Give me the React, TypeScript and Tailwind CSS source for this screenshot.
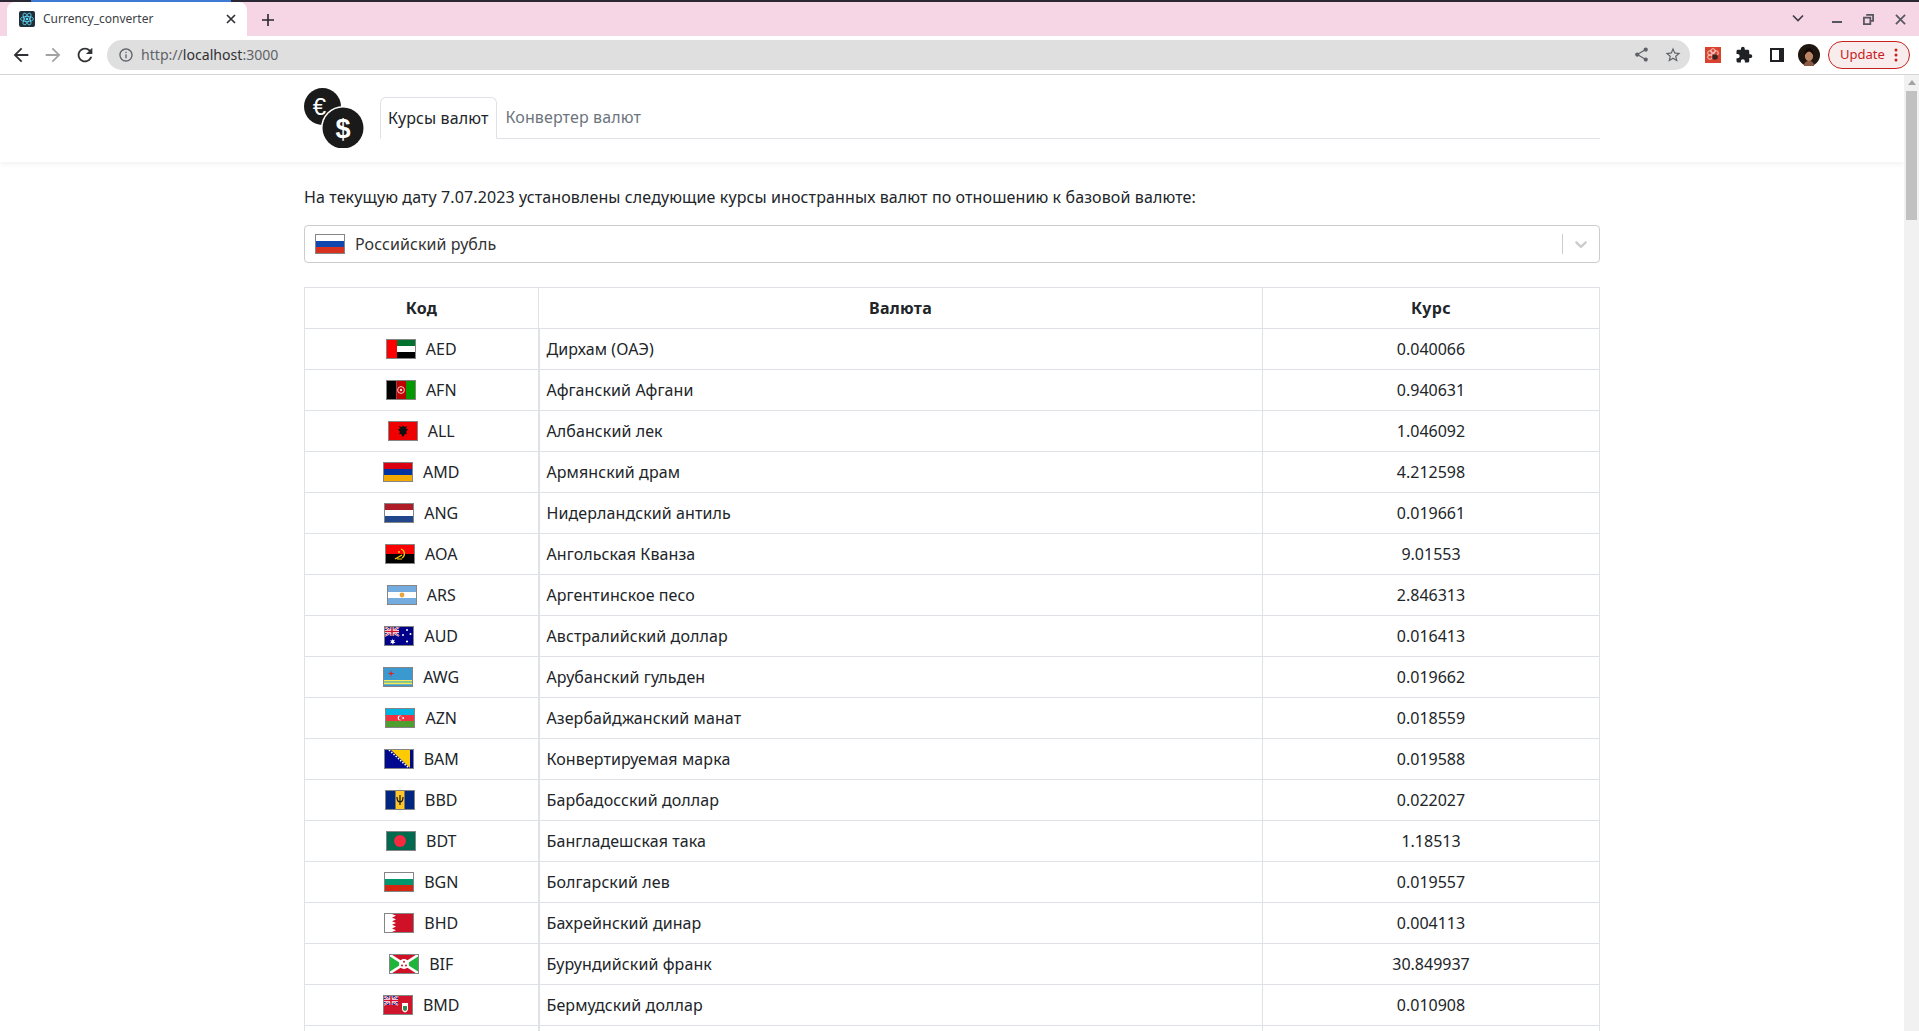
import type { ReactNode } from "react";

const rates = [
  ["AED", "Дирхам (ОАЭ)", "0.040066"],
  ["AFN", "Афганский Афгани", "0.940631"],
  ["ALL", "Албанский лек", "1.046092"],
  ["AMD", "Армянский драм", "4.212598"],
  ["ANG", "Нидерландский антиль", "0.019661"],
  ["AOA", "Ангольская Кванза", "9.01553"],
  ["ARS", "Аргентинское песо", "2.846313"],
  ["AUD", "Австралийский доллар", "0.016413"],
  ["AWG", "Арубанский гульден", "0.019662"],
  ["AZN", "Азербайджанский манат", "0.018559"],
  ["BAM", "Конвертируемая марка", "0.019588"],
  ["BBD", "Барбадосский доллар", "0.022027"],
  ["BDT", "Бангладешская така", "1.18513"],
  ["BGN", "Болгарский лев", "0.019557"],
  ["BHD", "Бахрейнский динар", "0.004113"],
  ["BIF", "Бурундийский франк", "30.849937"],
  ["BMD", "Бермудский доллар", "0.010908"],
];

function Stripes({ colors }: { colors: string[] }) {
  const h = 18 / colors.length;
  return (
    <>
      {colors.map((c, i) => (
        <rect key={i} x="0" y={i * h} width="28" height={h + 0.1} fill={c} />
      ))}
    </>
  );
}

function UnionJack({ w = 14, h = 9 }: { w?: number; h?: number }) {
  return (
    <g>
      <rect width={w} height={h} fill="#1a2f8f" />
      <path d={`M0 0L${w} ${h}M${w} 0L0 ${h}`} stroke="#fff" strokeWidth="2" />
      <path d={`M0 0L${w} ${h}M${w} 0L0 ${h}`} stroke="#d6102c" strokeWidth="0.8" />
      <path d={`M${w / 2} 0V${h}M0 ${h / 2}H${w}`} stroke="#fff" strokeWidth="3" />
      <path d={`M${w / 2} 0V${h}M0 ${h / 2}H${w}`} stroke="#d6102c" strokeWidth="1.6" />
    </g>
  );
}

const flags: Record<string, ReactNode> = {
  RUB: <Stripes colors={["#ffffff", "#0f47af", "#d8301f"]} />,
  AED: (
    <>
      <Stripes colors={["#00732f", "#ffffff", "#000000"]} />
      <rect width="10" height="18" fill="#ff0000" />
    </>
  ),
  AFN: (
    <>
      <rect width="9.5" height="18" fill="#000" />
      <rect x="9.5" width="9.5" height="18" fill="#be0000" />
      <rect x="19" width="9" height="18" fill="#009900" />
      <circle cx="14" cy="9" r="3.4" fill="none" stroke="#f3d0d0" strokeWidth="1" />
      <circle cx="14" cy="9" r="1.2" fill="#f3d0d0" />
    </>
  ),
  ALL: (
    <>
      <rect width="28" height="18" fill="#f00000" />
      <path d="M14 3l1 2 3-1-1 3 2 0-2 3 1 2-2 0-2 3-2-3-2 0 1-2-2-3 2 0-1-3 3 1z" fill="#111" />
    </>
  ),
  AMD: <Stripes colors={["#d90012", "#0033a0", "#f2a800"]} />,
  ANG: <Stripes colors={["#ae1c28", "#ffffff", "#21468b"]} />,
  AOA: (
    <>
      <rect width="28" height="9" fill="#ff0000" />
      <rect y="9" width="28" height="9" fill="#000" />
      <path d="M15 4a5 5 0 0 1 1 9" fill="none" stroke="#ffcb00" strokeWidth="1.3" />
      <path d="M9 14l7-4M11 14h5" stroke="#ffcb00" strokeWidth="1.2" />
      <circle cx="13" cy="7" r="1" fill="#ffcb00" />
    </>
  ),
  ARS: (
    <>
      <Stripes colors={["#74acdf", "#ffffff", "#74acdf"]} />
      <circle cx="14" cy="9" r="2.4" fill="#e8a33d" />
    </>
  ),
  AUD: (
    <>
      <rect width="28" height="18" fill="#00008b" />
      <UnionJack />
      <path d="M7 11.5l.9 1.8 1.9-.6-.9 1.8 1.6 1.2-2 .2-.5 1.9-1-1.7-2 .2 1.3-1.5-1.3-1.5 2 .2z" fill="#fff" />
      <circle cx="22" cy="3" r="1" fill="#fff" />
      <circle cx="22" cy="14.5" r="1.1" fill="#fff" />
      <circle cx="18" cy="8" r="1" fill="#fff" />
      <circle cx="25.5" cy="7" r="1" fill="#fff" />
    </>
  ),
  AWG: (
    <>
      <rect width="28" height="18" fill="#3a99cf" />
      <rect y="12" width="28" height="1.3" fill="#f6ea5a" />
      <rect y="15" width="28" height="1.3" fill="#f6ea5a" />
      <rect y="13.3" width="28" height="1.7" fill="#8fc98a" />
      <path d="M7 2l.7 2.8 2.8.7-2.8.7L7 9l-.7-2.8-2.8-.7 2.8-.7z" fill="#e0202c" />
    </>
  ),
  AZN: (
    <>
      <Stripes colors={["#00b5e2", "#ef3340", "#509e2f"]} />
      <circle cx="14" cy="9" r="2.4" fill="#fff" />
      <circle cx="14.8" cy="9" r="2" fill="#ef3340" />
      <circle cx="17.2" cy="9" r="0.9" fill="#fff" />
    </>
  ),
  BAM: (
    <>
      <rect width="28" height="18" fill="#000a8f" />
      <path d="M6 0h19v18z" fill="#fecb00" />
      <path d="M4 0L24 18" stroke="#fff" strokeWidth="1.6" strokeDasharray="1.5 1.5" />
    </>
  ),
  BBD: (
    <>
      <rect width="28" height="18" fill="#00267f" />
      <rect x="9.5" width="9" height="18" fill="#ffc726" />
      <path d="M14 4v10M11 6c0 4 1 5 3 5s3-1 3-5" fill="none" stroke="#111" strokeWidth="1.2" />
    </>
  ),
  BDT: (
    <>
      <rect width="28" height="18" fill="#006a4e" />
      <circle cx="13" cy="9" r="6" fill="#f42a41" />
    </>
  ),
  BGN: <Stripes colors={["#ffffff", "#00966e", "#d62612"]} />,
  BHD: (
    <>
      <rect width="28" height="18" fill="#ce1126" />
      <path d="M0 0h7L11 1.8 7 3.6 11 5.4 7 7.2 11 9 7 10.8 11 12.6 7 14.4 11 16.2 7 18H0z" fill="#fff" />
    </>
  ),
  BIF: (
    <>
      <rect width="28" height="18" fill="#ce1126" />
      <path d="M0 0l14 9L0 18zM28 0L14 9l14 9z" fill="#1eb53a" />
      <path d="M0 0L28 18M28 0L0 18" stroke="#fff" strokeWidth="2.6" />
      <circle cx="14" cy="9" r="5" fill="#fff" />
      <circle cx="14" cy="6.8" r="1" fill="#ce1126" />
      <circle cx="12" cy="10.4" r="1" fill="#ce1126" />
      <circle cx="16" cy="10.4" r="1" fill="#ce1126" />
    </>
  ),
  BMD: (
    <>
      <rect width="28" height="18" fill="#cf142b" />
      <UnionJack />
      <path d="M18 7h6v6c0 2-1.500 3-3 3.500-1.500-.5-3-1.500-3-3.500z" fill="#fff" />
      <path d="M19 10h4v3c0 1-1 1.800-2 2.200-1-.4-2-1.200-2-2.200z" fill="#2f8f4e" />
    </>
  ),
};

function Flag({ code }: { code: string }) {
  return (
    <svg
      viewBox="0 0 28 18"
      preserveAspectRatio="none"
      className="h-5 w-[30px] shrink-0 border border-[#858585]"
    >
      {flags[code]}
    </svg>
  );
}

function Icon({ d, className }: { d: string; className: string }) {
  return (
    <svg viewBox="0 0 24 24" className={className} fill="currentColor">
      <path d={d} />
    </svg>
  );
}

function BrowserChrome() {
  return (
    <div className="shrink-0 font-['Noto_Sans',sans-serif]">
      <div className="relative flex h-9 items-end bg-[#f6d5e5] pl-[7px]">
        <div className="absolute left-0 top-0 h-0.5 w-full bg-[#2b2833]" />
        <div className="absolute left-[31px] top-0 h-0.5 w-[200px] bg-[#3f7bd6]" />
        <div className="flex h-[34px] w-[240px] items-center rounded-t-lg bg-white pl-[12px] pr-[10px]">
          <svg viewBox="0 0 16 16" className="h-4 w-4 shrink-0">
            <rect width="16" height="16" rx="2" fill="#20303a" />
            <g fill="none" stroke="#61dafb" strokeWidth="0.8">
              <ellipse cx="8" cy="8" rx="6.5" ry="2.6" />
              <ellipse cx="8" cy="8" rx="6.5" ry="2.6" transform="rotate(60 8 8)" />
              <ellipse cx="8" cy="8" rx="6.5" ry="2.6" transform="rotate(120 8 8)" />
            </g>
            <circle cx="8" cy="8" r="1.3" fill="#61dafb" />
          </svg>
          <span className="ml-2 flex-1 text-xs text-[#3c4043]">Currency_converter</span>
          <svg viewBox="0 0 12 12" className="h-3 w-3 text-[#303134]" stroke="currentColor" strokeWidth="1.7">
            <path d="M2 2l8 8M10 2l-8 8" />
          </svg>
        </div>
        <svg viewBox="0 0 14 14" className="mb-[9px] ml-[14px] h-[14px] w-[14px] text-[#26272b]" stroke="currentColor" strokeWidth="1.6">
          <path d="M7 1v12M1 7h12" />
        </svg>
        <div className="flex-1" />
        <svg viewBox="0 0 14 14" className="mb-[11px] mr-[27px] h-3.5 w-3.5 text-[#3b3b45]" fill="none" stroke="currentColor" strokeWidth="1.6">
          <path d="M2 4.500l5 5 5-5" />
        </svg>
        <div className="mb-[13px] mr-[21px] h-0.5 w-[10px] bg-[#55555f]" />
        <svg viewBox="0 0 12 12" className="mb-[11px] mr-[21px] h-[11px] w-[11px] text-[#55555f]" fill="none" stroke="currentColor" strokeWidth="1.9">
          <path d="M3.500 1h7.500v6.500H9M1 4h7v7H1z" />
        </svg>
        <svg viewBox="0 0 12 12" className="mb-[11px] mr-[13px] h-[11px] w-[11px] text-[#55555f]" stroke="currentColor" strokeWidth="1.8">
          <path d="M1 1l10 10M11 1L1 11" />
        </svg>
      </div>
      <div className="flex h-[39px] items-center border-b border-[#d3d4d6] bg-white pb-px">
        <Icon className="ml-[10px] h-[22px] w-[22px] text-[#303134]" d="M20 11H7.830l5.590-5.590L12 4l-8 8 8 8 1.410-1.410L7.830 13H20v-2z" />
        <Icon className="ml-[10px] h-[22px] w-[22px] text-[#a3a3a5]" d="M12 4l-1.410 1.410L16.170 11H4v2h12.170l-5.580 5.590L12 20l8-8z" />
        <Icon className="ml-[10px] h-[22px] w-[22px] text-[#303134]" d="M17.650 6.350A7.958 7.958 0 0 0 12 4c-4.420 0-7.990 3.580-7.990 8s3.570 8 7.990 8c3.730 0 6.840-2.550 7.730-6h-2.080A5.990 5.990 0 0 1 12 18c-3.310 0-6-2.690-6-6s2.690-6 6-6c1.660 0 3.140.690 4.220 1.780L13 11h7V4l-2.350 2.350z" />
        <div className="ml-[11px] flex h-[30px] flex-1 items-center rounded-full bg-[#dfdfdf] pl-[11px] pr-[8px]">
          <Icon className="h-4 w-4 text-[#5f6368]" d="M11 7h2v2h-2zm0 4h2v6h-2zm1-9C6.480 2 2 6.480 2 12s4.480 10 10 10 10-4.480 10-10S17.520 2 12 2zm0 18c-4.410 0-8-3.590-8-8s3.590-8 8-8 8 3.590 8 8-3.590 8-8 8z" />
          <span className="ml-[7px] flex-1 text-[14.100px] text-[#5f6368]">
            http://<span className="text-[#303134]">localhost</span>:3000
          </span>
          <Icon className="h-[17px] w-[17px] text-[#5f6368]" d="M18 16.080c-.760 0-1.440.300-1.960.770L8.910 12.700c.050-.230.090-.460.090-.700s-.040-.470-.090-.700l7.050-4.110c.540.500 1.250.810 2.040.810 1.660 0 3-1.340 3-3s-1.340-3-3-3-3 1.340-3 3c0 .240.040.470.090.700L8.040 9.810C7.500 9.310 6.790 9 6 9c-1.660 0-3 1.340-3 3s1.340 3 3 3c.790 0 1.500-.310 2.040-.810l7.120 4.160c-.050.210-.080.430-.080.650 0 1.610 1.310 2.920 2.920 2.920s2.920-1.310 2.920-2.920-1.310-2.920-2.920-2.920z" />
          <Icon className="ml-[14px] h-[18px] w-[18px] text-[#5f6368]" d="M22 9.240l-7.190-.620L12 2 9.190 8.630 2 9.240l5.460 4.730L5.820 21 12 17.270 18.180 21l-1.630-7.030L22 9.240zM12 15.400l-3.760 2.270 1-4.280-3.320-2.880 4.380-.380L12 6.100l1.710 4.040 4.380.380-3.320 2.880 1 4.280L12 15.400z" />
        </div>
        <svg viewBox="0 0 16 16" className="ml-[15px] h-4 w-4">
          <rect width="16" height="16" fill="#d8432f" />
          <g fill="none" stroke="#f8d9d4" strokeWidth="0.9">
            <circle cx="5" cy="6" r="2.300" />
            <circle cx="11" cy="6" r="2.300" />
            <circle cx="8" cy="4" r="2.300" />
            <circle cx="5" cy="10" r="2.300" />
          </g>
          <circle cx="10" cy="10" r="2.800" fill="#3a2320" />
        </svg>
        <Icon className="ml-[14px] h-[18px] w-[18px] text-[#202124]" d="M20.500 11H19V7c0-1.100-.900-2-2-2h-4V3.500C13 2.120 11.880 1 10.500 1S8 2.120 8 3.500V5H4c-1.100 0-1.990.900-1.990 2v3.800H3.500c1.490 0 2.700 1.210 2.700 2.700s-1.210 2.700-2.700 2.700H2V20c0 1.100.900 2 2 2h3.800v-1.500c0-1.490 1.210-2.700 2.700-2.700 1.490 0 2.700 1.210 2.700 2.700V22H17c1.100 0 2-.900 2-2v-4h1.500c1.380 0 2.500-1.120 2.500-2.500S21.880 11 20.500 11z" />
        <div className="ml-[17px] flex h-[14px] w-[14px] justify-end border-2 border-[#202124] bg-[#202124]">
          <div className="mr-[3px] h-full w-[7px] bg-white" />
        </div>
        <svg viewBox="0 0 22 22" className="ml-[14px] h-[22px] w-[22px]">
          <circle cx="11" cy="11" r="11" fill="#1f1610" />
          <ellipse cx="11" cy="11.500" rx="4.200" ry="5.500" fill="#b98564" />
          <path d="M6 22c0-4 2.500-5 5-5s5 1 5 5z" fill="#8a5a44" />
          <path d="M6 13c0-6 3-9 5-9s5 3 5 9c-1-3-3-5.500-5-5.500S7 10 6 13z" fill="#120a07" />
        </svg>
        <div className="ml-[8px] mr-[9px] flex h-7 w-[82px] items-center rounded-full border border-[#c5221f] bg-[#f9ecec] pl-[11px] pr-[11px]">
          <span className="flex-1 text-[13px] text-[#c5221f]">Update</span>
          <svg viewBox="0 0 4 14" className="h-[14px] w-1 text-[#c5221f]" fill="currentColor">
            <circle cx="2" cy="2" r="1.500" />
            <circle cx="2" cy="7" r="1.500" />
            <circle cx="2" cy="12" r="1.500" />
          </svg>
        </div>
      </div>
    </div>
  );
}

function Logo() {
  return (
    <svg viewBox="0 0 60 60" className="h-[60px] w-[60px] shrink-0">
      <circle cx="18.500" cy="18.500" r="18.500" fill="#1a1a1a" />
      <text x="15.500" y="27" textAnchor="middle" fontSize="24" fill="#fff" fontFamily="Liberation Sans, sans-serif">
        €
      </text>
      <circle cx="39" cy="40" r="22" fill="#fff" />
      <circle cx="39" cy="40" r="20.500" fill="#1a1a1a" />
      <text x="39" y="49.500" textAnchor="middle" fontSize="27" fontWeight="700" fill="#fff" fontFamily="Liberation Sans, sans-serif">
        $
      </text>
    </svg>
  );
}

function Scrollbar() {
  return (
    <div className="flex w-[15px] shrink-0 flex-col items-center bg-[#f1f1f1]">
      <div className="mt-[5px] h-0 w-0 border-x-[4px] border-b-[5px] border-x-transparent border-b-[#a3a3a3]" />
      <div className="mt-[6px] h-[129px] w-[11px] bg-[#c1c1c1]" />
    </div>
  );
}

export default function App() {
  return (
    <div className="flex h-screen flex-col overflow-hidden bg-white font-['Noto_Sans',sans-serif] text-base text-[#212529]">
      <BrowserChrome />
      <div className="flex min-h-0 flex-1">
        <div className="min-w-0 flex-1 overflow-hidden">
          <header className="h-[87px] bg-white shadow-[0_2px_6px_rgba(0,0,0,0.06)]">
            <div className="mx-auto flex w-[1296px] items-start pt-[13px]">
              <Logo />
              <div className="ml-[16px] mt-[9px] flex h-[42px] flex-1 border-b border-[#dee2e6] tracking-[0.11px]">
                <a className="h-[42px] rounded-t-md border border-[#dee2e6] border-b-white bg-white px-[7px] py-2 leading-6 text-[#212529]">
                  Курсы валют
                </a>
                <a className="h-[41px] pl-[9px] pr-2 py-2 leading-6 text-[#6c757d]">Конвертер валют</a>
              </div>
            </div>
          </header>
          <main className="mx-auto w-[1296px] pt-[23px]">
            <p className="leading-6 tracking-[0.11px]">На текущую дату 7.07.2023 установлены следующие курсы иностранных валют по отношению к базовой валюте:</p>
            <div className="mt-4 flex h-[38px] items-center rounded border border-[#cccccc] pl-[10px] pr-[8px]">
              <Flag code="RUB" />
              <span className="ml-[10px] flex-1 tracking-[0.08px] text-[#333333]">Российский рубль</span>
              <div className="h-5 w-px bg-[#cccccc]" />
              <svg viewBox="0 0 20 20" className="ml-[8px] h-5 w-5 text-[#cccccc]" fill="currentColor">
                <path d="M4.516 7.548c.436-.446 1.043-.481 1.576 0L10 11.295l3.908-3.747c.533-.481 1.141-.446 1.574 0 .436.445.408 1.197 0 1.615-.406.418-4.695 4.502-4.695 4.502a1.095 1.095 0 0 1-1.576 0S4.924 9.581 4.516 9.163s-.436-1.170 0-1.615z" />
              </svg>
            </div>
            <table className="mt-6 w-full table-fixed border-collapse border border-[#dee2e6]">
              <colgroup>
                <col className="w-[234px]" />
                <col className="w-[724px]" />
                <col />
              </colgroup>
              <thead>
                <tr className="h-[41px]">
                  <th className="border border-[#dee2e6] px-2 py-2 text-center font-bold leading-6 tracking-[0.3px]">Код</th>
                  <th className="border border-[#dee2e6] px-2 py-2 text-center font-bold leading-6 tracking-[0.3px]">Валюта</th>
                  <th className="border border-[#dee2e6] px-2 py-2 text-center font-bold leading-6 tracking-[0.3px]">Курс</th>
                </tr>
              </thead>
              <tbody>
                {rates.map(([code, name, rate]) => (
                  <tr key={code} className="h-[41px]">
                    <td className="border border-r-2 border-[#dee2e6] px-2 py-2 leading-6">
                      <div className="flex items-center justify-center gap-[10px]">
                        <Flag code={code} />
                        <span>{code}</span>
                      </div>
                    </td>
                    <td className="border border-[#dee2e6] py-2 pl-[7px] pr-2 leading-6 tracking-[0.09px]">{name}</td>
                    <td className="border border-[#dee2e6] px-2 py-2 text-center leading-6">{rate}</td>
                  </tr>
                ))}
                {/* the next row starts right at the bottom edge, only its lines show */}
                <tr className="h-[41px]">
                  <td className="border border-r-2 border-[#dee2e6]" />
                  <td className="border border-[#dee2e6]" />
                  <td className="border border-[#dee2e6]" />
                </tr>
              </tbody>
            </table>
          </main>
        </div>
        <Scrollbar />
      </div>
    </div>
  );
}
